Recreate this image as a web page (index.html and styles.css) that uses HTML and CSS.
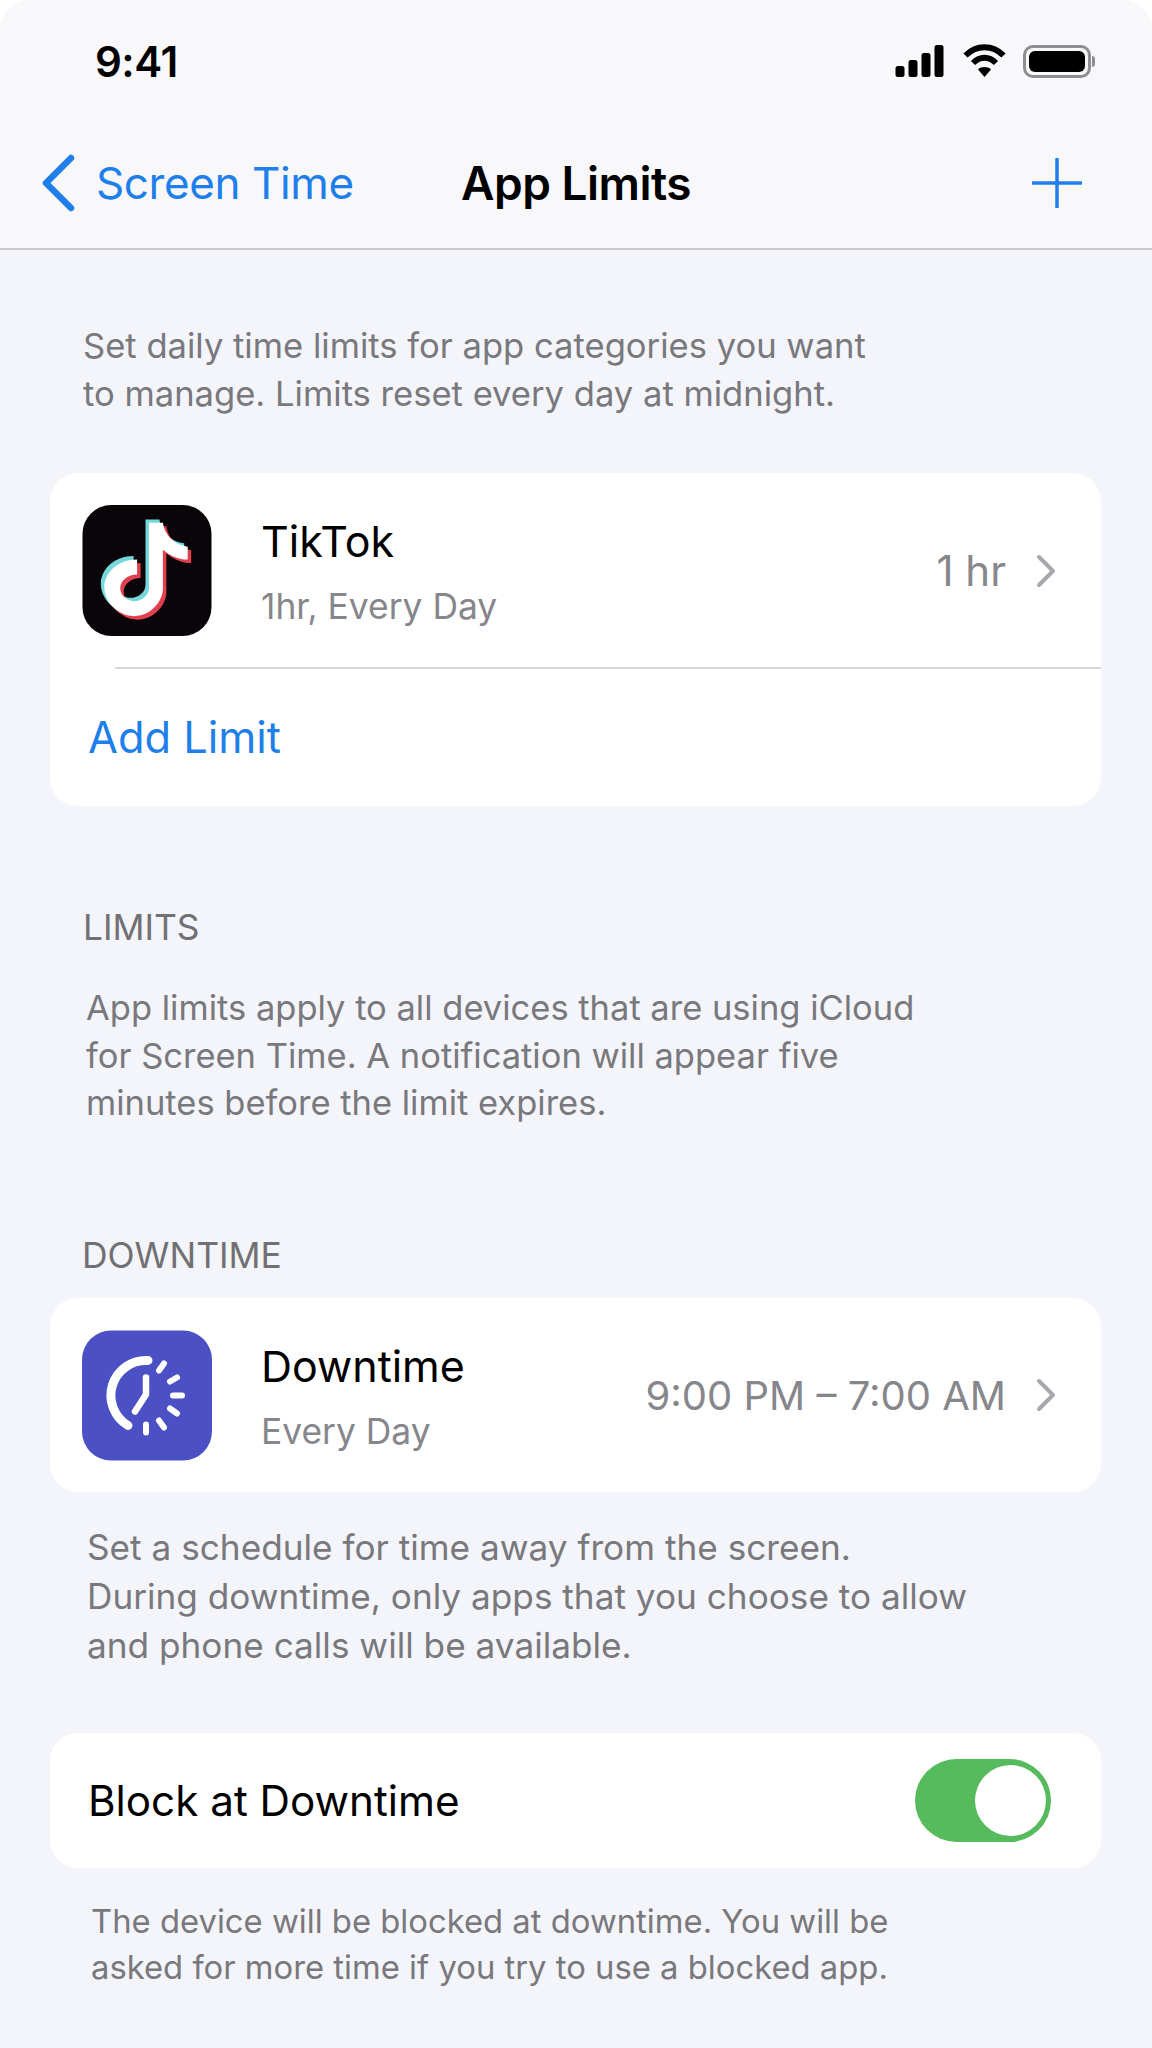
FILE: index.html
```html
<!DOCTYPE html>
<html lang="en">
<head>
<meta charset="utf-8">
<title>App Limits</title>
<link rel="stylesheet" href="styles.css">
</head>
<body>
<div class="screen">
  <header class="top">
    <div class="status">
      <span class="clock">9:41</span>
      <div class="status-icons">
        <svg class="ic-signal" viewBox="0 0 48 32"><rect x="0" y="21" width="9" height="11" rx="2.5"/><rect x="13" y="15" width="9" height="17" rx="2.5"/><rect x="26" y="8" width="9" height="24" rx="2.5"/><rect x="39" y="0" width="9" height="32" rx="2.5"/></svg>
        <svg class="ic-wifi" viewBox="0 0 44 34"><path d="M3 12.500C14 1.500 30 1.500 41 12.500" fill="none" stroke="#000" stroke-width="6"/><path d="M10.500 20C17.500 13 26.500 13 33.500 20" fill="none" stroke="#000" stroke-width="6"/><path d="M22 34L15.500 26.500C19 23.300 25 23.300 28.500 26.500Z"/></svg>
        <div class="battery"><div class="battery-fill"></div></div>
      </div>
    </div>
    <nav class="nav">
      <div class="back">
        <svg class="ic-back" viewBox="0 0 34 58"><path d="M30 4L5 29L30 54" fill="none" stroke="#1f7fea" stroke-width="6.500" stroke-linecap="round" stroke-linejoin="round"/></svg>
        <span>Screen Time</span>
      </div>
      <h1 class="title">App Limits</h1>
      <svg class="ic-plus" viewBox="0 0 50 50"><path d="M25 1V49M1 25H49" fill="none" stroke="#1f7fea" stroke-width="3.500" stroke-linecap="round"/></svg>
    </nav>
  </header>

  <main class="content">
    <p class="note note-intro">Set daily time limits for app categories you want<br>to manage. Limits reset every day at midnight.</p>

    <section class="card card-limit">
      <div class="row">
        <svg class="app-icon" viewBox="0 0 130 132">
          <rect width="130" height="132" rx="29" fill="#0a0508"/>
          <path fill="#75d9dc" transform="translate(-3.500 -3.500)" d="M67 18H81C83 32 95 41 106 42V55C95 55 87 50 81 45V84C81 98 68 112 52 112C36 112 22 98 22 83C22 68 36 55 55 55V70C46 70 38 76 38 84C38 91 45 97 52 97C60 97 67 91 67 84Z"/>
          <path fill="#e2404f" transform="translate(3.500 3.500)" d="M67 18H81C83 32 95 41 106 42V55C95 55 87 50 81 45V84C81 98 68 112 52 112C36 112 22 98 22 83C22 68 36 55 55 55V70C46 70 38 76 38 84C38 91 45 97 52 97C60 97 67 91 67 84Z"/>
          <path fill="#fff" d="M67 18H81C83 32 95 41 106 42V55C95 55 87 50 81 45V84C81 98 68 112 52 112C36 112 22 98 22 83C22 68 36 55 55 55V70C46 70 38 76 38 84C38 91 45 97 52 97C60 97 67 91 67 84Z"/>
        </svg>
        <div class="row-text">
          <div class="row-title">TikTok</div>
          <div class="row-sub">1hr, Every Day</div>
        </div>
        <div class="row-value value-short">1 hr</div>
        <svg class="chev" viewBox="0 0 20 34"><path d="M3 3L17 17L3 31" fill="none" stroke="#a8a8ac" stroke-width="4" stroke-linecap="round" stroke-linejoin="round"/></svg>
      </div>
      <div class="divider"></div>
      <div class="add-limit">Add Limit</div>
    </section>

    <h2 class="section-label label-limits">LIMITS</h2>
    <p class="note note-limits">App limits apply to all devices that are using iCloud<br>for Screen Time. A notification will appear five<br>minutes before the limit expires.</p>

    <h2 class="section-label label-downtime">DOWNTIME</h2>
    <section class="card card-downtime">
      <div class="row">
        <svg class="app-icon" viewBox="0 0 130 130">
          <rect width="130" height="130" rx="29" fill="#4b50c4"/>
          <g fill="none" stroke="#fff" stroke-linecap="round" stroke-linejoin="round">
            <path d="M66 30A35 35 0 0 0 46 95" stroke-width="9"/>
            <path d="M64 47V64L53 81" stroke-width="6.500"/>
            <g stroke-width="6">
              <path d="M82 33L77 40"/><path d="M95 47L88 51"/><path d="M100 65H91"/><path d="M95 83L88 78"/><path d="M82 97L77 90"/><path d="M64 102V94"/>
            </g>
          </g>
        </svg>
        <div class="row-text">
          <div class="row-title">Downtime</div>
          <div class="row-sub">Every Day</div>
        </div>
        <div class="row-value">9:00 PM – 7:00 AM</div>
        <svg class="chev" viewBox="0 0 20 34"><path d="M3 3L17 17L3 31" fill="none" stroke="#a8a8ac" stroke-width="4" stroke-linecap="round" stroke-linejoin="round"/></svg>
      </div>
    </section>
    <p class="note note-downtime">Set a schedule for time away from the screen.<br>During downtime, only apps that you choose to allow<br>and phone calls will be available.</p>

    <section class="card card-block">
      <div class="block-label">Block at Downtime</div>
      <div class="toggle"><div class="knob"></div></div>
    </section>
    <p class="note note-block">The device will be blocked at downtime. You will be<br>asked for more time if you try to use a blocked app.</p>
  </main>
</div>
</body>
</html>
```
FILE: styles.css
```css
* { box-sizing: border-box; }
html, body { margin: 0; padding: 0; background: #fff; }
body { width: 1152px; height: 2048px; overflow: hidden; font-family: "Inter", "Liberation Sans", sans-serif; }
.screen { width: 1152px; height: 2048px; background: #f4f5fa; border-radius: 30px 30px 0 0; overflow: hidden; }
.top { height: 250px; background: #f8f8fa; border-bottom: 2px solid #c9c9cd; }
.status { height: 122px; display: flex; align-items: center; justify-content: space-between; padding: 0 61px 0 95px; }
.clock { font-size: 42px; font-weight: 600; color: #000; letter-spacing: -0.5px; }
.status-icons { display: flex; align-items: center; gap: 16px; }
.ic-signal { width: 49px; height: 32px; margin-right: 2px; }
.ic-wifi { width: 45px; height: 34px; margin-bottom: 2px; }
.battery { width: 68px; height: 33px; border: 3px solid #8e8e90; border-radius: 10px; padding: 3px; position: relative; }
.battery::after { content: ""; position: absolute; right: -7px; top: 8px; width: 3px; height: 11px; background: #8e8e90; border-radius: 0 3px 3px 0; }
.battery-fill { width: 100%; height: 100%; background: #000; border-radius: 6px; }
.nav { height: 126px; display: flex; align-items: center; padding: 0 70px 4px 41px; }
.back { width: 420px; flex: none; display: flex; align-items: center; gap: 21px; color: #1f7fea; font-size: 44px; letter-spacing: -0.4px; }
.ic-back { width: 34px; height: 58px; flex: none; }
.title { margin: 0; font-size: 46px; font-weight: 600; color: #000; letter-spacing: -0.5px; }
.ic-plus { width: 50px; height: 50px; margin-left: auto; }
.content { padding: 0 51px 0 50px; }
.note { margin: 0; color: #78787d; font-size: 34.6px; line-height: 47.5px; }
.note-intro { padding: 72px 0 0 33px; }
.card { background: #fff; border-radius: 28px; }
.card-limit { margin-top: 56px; height: 333px; }
.row { display: flex; align-items: center; padding: 32px 45px 31px 32px; }
.app-icon { width: 130px; height: 131px; flex: none; }
.row-text { margin: 5px 0 0 49px; flex: 1; }
.row-title { font-size: 43px; color: #000; line-height: 50px; }
.row-sub { font-size: 35.4px; color: #86868b; line-height: 46px; margin-top: 18px; }
.row-value { font-size: 40px; color: #86868b; }
.value-short { font-size: 42px; }
.chev { width: 20px; height: 34px; margin-left: 30px; flex: none; }
.divider { height: 2px; background: #d8d8dc; margin-left: 65px; }
.add-limit { color: #1f7fea; font-size: 43.4px; padding: 42px 0 0 38px; }
.section-label { margin: 0; font-weight: 400; color: #707075; font-size: 35.4px; line-height: 40px; }
.label-limits { margin-top: 102px; padding-left: 33px; }
.note-limits { padding: 36px 0 0 36px; font-size: 34.5px; }
.label-downtime { margin-top: 109px; padding-left: 32px; }
.card-downtime { margin-top: 22px; height: 194px; }
.note-downtime { padding: 31px 0 0 37px; font-size: 35.2px; line-height: 49px; }
.card-block { margin-top: 63px; height: 135px; display: flex; align-items: center; justify-content: space-between; padding: 0 50px 0 38px; }
.block-label { font-size: 42.2px; color: #000; }
.toggle { width: 136px; height: 83px; border-radius: 42px; background: #55bb5d; padding: 6px 5px; display: flex; justify-content: flex-end; }
.knob { width: 71px; height: 71px; border-radius: 50%; background: #fff; }
.note-block { padding: 30px 0 0 41px; font-size: 32.8px; line-height: 46px; }
```
